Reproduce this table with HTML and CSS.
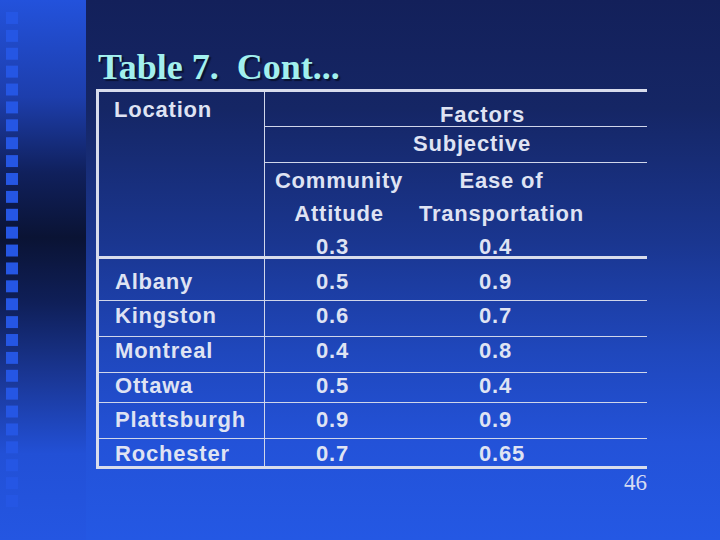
FILE: index.html
```html
<!DOCTYPE html>
<html>
<head>
<meta charset="utf-8">
<link rel="stylesheet" href="styles.css">
</head>
<body>
<div class="slide">
  <div class="strip"><div class="squares"></div></div>
  <div class="main">
    <h1 class="title">Table 7.&nbsp; Cont...</h1>
    <div class="table">
      <div class="head">
        <div class="loc-head">Location</div>
        <div class="divider"></div>
        <div class="factors">
          <div class="f-row">Factors</div>
          <div class="s-row">Subjective</div>
          <div class="cols">
            <div class="c2">
              <div class="hl">Community</div>
              <div class="hl">Attitude</div>
              <div class="hl n2">0.3</div>
            </div>
            <div class="c3">
              <div class="hl">Ease of</div>
              <div class="hl">Transportation</div>
              <div class="hl n3">0.4</div>
            </div>
          </div>
        </div>
      </div>
      <div class="row r1"><div class="name">Albany</div><div class="divider"></div><div class="v2">0.5</div><div class="v3">0.9</div></div>
      <div class="row r2"><div class="name">Kingston</div><div class="divider"></div><div class="v2">0.6</div><div class="v3">0.7</div></div>
      <div class="row r3"><div class="name">Montreal</div><div class="divider"></div><div class="v2">0.4</div><div class="v3">0.8</div></div>
      <div class="row r4"><div class="name">Ottawa</div><div class="divider"></div><div class="v2">0.5</div><div class="v3">0.4</div></div>
      <div class="row r5"><div class="name">Plattsburgh</div><div class="divider"></div><div class="v2">0.9</div><div class="v3">0.9</div></div>
      <div class="row r6"><div class="name">Rochester</div><div class="divider"></div><div class="v2">0.7</div><div class="v3">0.65</div></div>
    </div>
    <div class="page">46</div>
  </div>
</div>
</body>
</html>
```

FILE: styles.css
```css
html, body {
  margin: 0;
  padding: 0;
}
body {
  width: 720px;
  height: 540px;
  overflow: hidden;
  background: #1c3a9c;
}
.slide {
  display: flex;
  width: 720px;
  height: 540px;
}
.strip {
  width: 86px;
  height: 540px;
  flex: none;
  background: linear-gradient(to bottom, #2352dc 0%, #1d3eac 18%, #10205c 32%, #0a1334 44%, #0f1f58 56%, #1a3796 70%, #2250d6 84%, #2456e2 100%);
}
.squares {
  margin-left: 6px;
  margin-top: 12px;
  width: 12px;
  height: 500px;
  background-image: linear-gradient(to bottom, #2556e4 0, #2556e4 12px, transparent 12px);
  background-size: 12px 17.9px;
  background-repeat: repeat-y;
}
.main {
  flex: 1;
  height: 540px;
  background: linear-gradient(to bottom, #13205a 0%, #152665 20%, #1a3690 45%, #1f47bc 65%, #2352d8 82%, #2458e4 100%);
  padding-left: 10px;
  box-sizing: border-box;
}
.title {
  margin: 0;
  padding-top: 49px;
  padding-left: 2px;
  height: 36px;
  font-family: "Liberation Serif", "Times New Roman", serif;
  font-weight: bold;
  font-size: 36px;
  line-height: 36px;
  color: #a2f0ee;
  text-shadow: 2px 2px 1px #0a1232;
  white-space: nowrap;
  box-sizing: content-box;
}
.table {
  margin-top: 4px;
  width: 551px;
  border-top: 3px solid #d8dcec;
  border-left: 3px solid #d8dcec;
  border-bottom: 3px solid #d8dcec;
  box-sizing: border-box;
  font-family: "Liberation Sans", Arial, sans-serif;
  font-weight: bold;
  font-size: 22px;
  line-height: 26px;
  letter-spacing: 0.8px;
  color: #dfe3f3;
}
.head {
  display: flex;
  border-bottom: 3px solid #d8dcec;
}
.loc-head {
  width: 165px;
  flex: none;
  box-sizing: border-box;
  padding-top: 5px;
  padding-left: 15px;
  height: 164px;
}
.divider {
  width: 1px;
  flex: none;
  background: #d0d6ea;
  align-self: stretch;
}
.factors {
  flex: 1;
  display: flex;
  flex-direction: column;
}
.f-row {
  height: 24px;
  padding-top: 10px;
  padding-left: 175px;
  border-bottom: 1px solid #d0d6ea;
}
.s-row {
  height: 31px;
  padding-top: 4px;
  padding-left: 148px;
  border-bottom: 1px solid #d0d6ea;
}
.cols {
  display: flex;
  height: 92px;
  padding-top: 1px;
}
.c2 {
  width: 148px;
  flex: none;
  text-align: center;
}
.c3 {
  flex: 1;
  text-align: center;
  padding-right: 57px;
}
.hl {
  line-height: 33px;
  white-space: nowrap;
}
.n2 {
  text-align: left;
  padding-left: 51px;
}
.n3 {
  text-align: left;
  padding-left: 66px;
}
.row {
  display: flex;
  border-bottom: 1px solid #d0d6ea;
}
.row .name, .row .v2, .row .v3 {
  white-space: nowrap;
  padding-top: var(--pt);
  box-sizing: border-box;
}
.row .name {
  width: 165px;
  flex: none;
  padding-left: 16px;
}
.row .v2 {
  width: 148px;
  flex: none;
  padding-left: 51px;
}
.row .v3 {
  flex: 1;
  padding-left: 66px;
}
.r1 { height: 41px; --pt: 10px; }
.r2 { height: 35px; --pt: 2px; }
.r3 { height: 35px; --pt: 1px; }
.r4 { height: 29px; --pt: 0px; }
.r5 { height: 35px; --pt: 4px; }
.r6 { height: 27px; --pt: 2px; border-bottom: none; }
.page {
  width: 551px;
  margin-top: 2px;
  text-align: right;
  font-family: "Liberation Serif", "Times New Roman", serif;
  font-size: 23px;
  line-height: 24px;
  color: #d6dcf2;
}
```
